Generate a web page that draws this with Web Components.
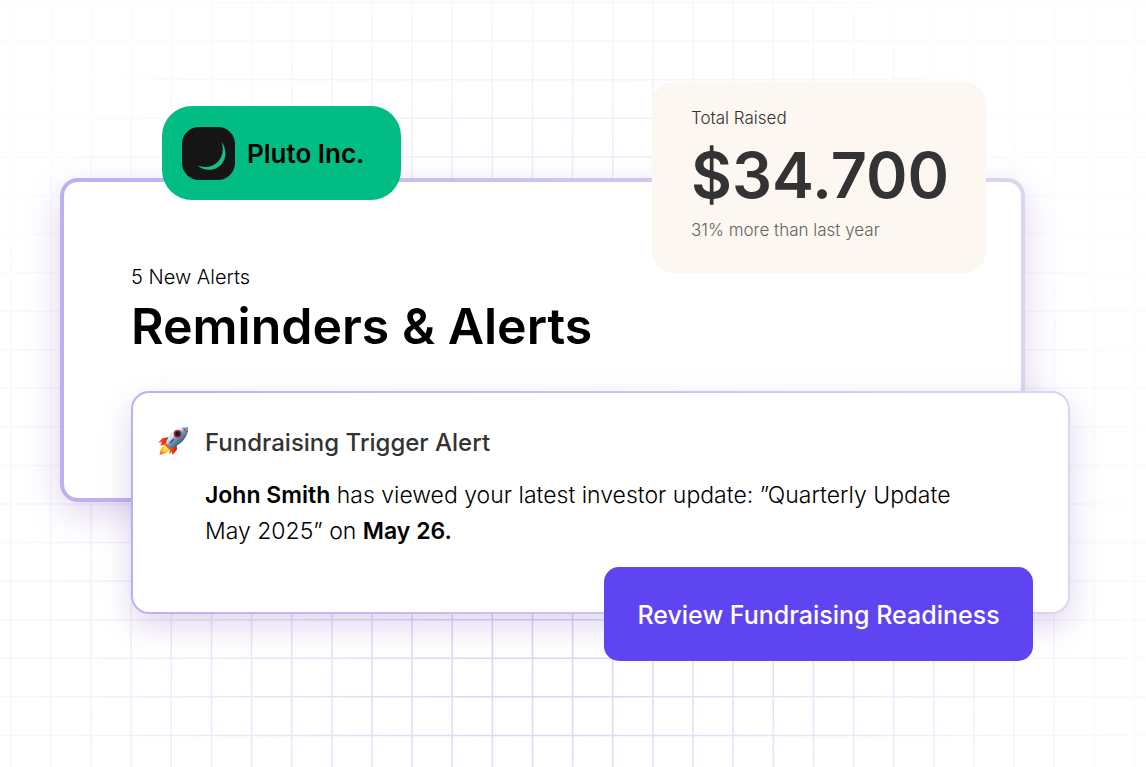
<!DOCTYPE html>
<html lang="en">
<head>
<meta charset="utf-8">
<meta name="viewport" content="width=device-width, initial-scale=1">
<title>Reminders &amp; Alerts</title>
<style>
  body { margin: 0; background: #fff; color: #000; font-family: Inter, "Open Sans", sans-serif; font-weight: 300; }
  b { font-weight: 600; }
</style>
</head>
<body>
<alerts-stage>
  <alerts-panel>
    <company-badge slot="overlay">Pluto Inc.</company-badge>
    <stat-card slot="overlay">
      <span slot="label">Total Raised</span>
      <span slot="value">$34.700</span>
      <span slot="note">31% more than last year</span>
    </stat-card>
    <span slot="count">5 New Alerts</span>
    <span slot="title">Reminders &amp; Alerts</span>
    <alert-card>
      <span slot="title">Fundraising Trigger Alert</span>
      <b>John Smith</b> has viewed your latest investor update: ”Quarterly Update<br>
      May 2025” on <b>May 26.</b>
      <action-button slot="action">Review Fundraising Readiness</action-button>
    </alert-card>
  </alerts-panel>
</alerts-stage>

<script>
const define = (name, html, setup) => customElements.define(name, class extends HTMLElement {
  constructor() {
    super();
    const template = document.createElement('template');
    template.innerHTML = html;
    this.attachShadow({ mode: 'open' }).append(template.content.cloneNode(true));
    if (setup) setup(this.shadowRoot);
  }
});

define('grid-backdrop', `
  <style>
    :host { display: block; overflow: hidden; }
    svg { display: block; width: 100%; height: 100%; }
  </style>
  <svg viewBox="0 0 1146 767" preserveAspectRatio="none" aria-hidden="true">
    <defs>
      <radialGradient id="fade" gradientUnits="userSpaceOnUse" cx="0" cy="0" r="1" gradientTransform="translate(540 610) scale(620 720)">
        <stop offset="0" stop-color="#fff" stop-opacity=".9"/>
        <stop offset=".3" stop-color="#fff" stop-opacity=".65"/>
        <stop offset=".75" stop-color="#fff" stop-opacity=".25"/>
        <stop offset="1" stop-color="#fff" stop-opacity=".08"/>
      </radialGradient>
      <mask id="m" maskUnits="userSpaceOnUse" x="0" y="0" width="1146" height="767"><rect width="1146" height="767" fill="url(#fade)"/></mask>
    </defs>
    <path fill="none" stroke="#d3ccf2" stroke-width="1.500" mask="url(#m)"/>
  </svg>`, root => {
  let d = '';
  for (let i = 0; i < 29; i++) d += `M${10.8 + i * 40.13} 0V767`;
  for (let i = 0; i < 20; i++) d += `M0 ${2.6 + i * 38.57}H1146`;
  root.querySelector('path').setAttribute('d', d);
});

define('alerts-stage', `
  <style>
    :host { display: block; position: relative; box-sizing: border-box; min-height: 100vh; padding: 178px 121px 0 60px; }
    grid-backdrop { position: absolute; inset: 0; }
    main { position: relative; }
  </style>
  <grid-backdrop></grid-backdrop>
  <main><slot></slot></main>`);

define('alerts-panel', `
  <style>
    :host {
      display: block; position: relative; padding: 81px 0 0 67px;
      border: 4px solid transparent; border-radius: 18px;
      background: linear-gradient(#fff, #fff) padding-box, linear-gradient(90deg, #bdb0f1, #ddd4f2) border-box;
      box-shadow: 0 12px 36px rgba(100, 50, 180, .2);
    }
    p, h1 { margin: 0; }
    p { font-size: 20px; line-height: 28px; }
    h1 { font-size: 50px; line-height: 70px; font-weight: 600; margin-bottom: 30px; }
  </style>
  <p><slot name="count"></slot></p>
  <h1><slot name="title"></slot></h1>
  <slot></slot>
  <slot name="overlay"></slot>`);

define('company-badge', `
  <style>
    :host {
      position: absolute; left: 98px; top: -76px; box-sizing: border-box; width: 239px;
      display: flex; align-items: center; gap: 12px; padding: 21px 20px 20px;
      border-radius: 30px; background: #02bd83; font-size: 26px; line-height: 36px; font-weight: 600; white-space: nowrap;
    }
    svg { flex: none; width: 53px; height: 53px; }
  </style>
  <svg viewBox="0 0 53 53" aria-hidden="true">
    <rect width="53" height="53" rx="17" fill="#151515"/>
    <path fill="#16c08b" d="M39.500 14.500C46 23.500 44.500 35.500 35 40.700C28.500 44.300 20.500 43 15.500 38.500C22.500 41.300 30.500 40 35.500 35.200C41 30 42 22 39.500 14.500Z"/>
  </svg>
  <slot></slot>`);

define('stat-card', `
  <style>
    :host {
      position: absolute; right: 35px; top: -100px; box-sizing: border-box; width: 334px;
      display: flex; flex-direction: column; padding: 24px 38px 31px 39px;
      border-radius: 22px; background: #fcf7f1; color: #333; white-space: nowrap;
    }
    div { font-size: 17px; line-height: 24px; }
    .value { font-size: 63px; line-height: 70px; font-weight: 600; margin: 10px 0 8px; }
    .note { color: #666462; }
  </style>
  <div><slot name="label"></slot></div>
  <div class="value"><slot name="value"></slot></div>
  <div class="note"><slot name="note"></slot></div>`);

define('rocket-icon', `
  <style>
    :host { display: block; flex: none; width: 32px; height: 32px; }
    svg { display: block; width: 100%; height: 100%; }
  </style>
  <svg viewBox="0 0 32 32" aria-hidden="true">
    <defs>
      <linearGradient id="hull" x1="12" y1="7" x2="23" y2="19" gradientUnits="userSpaceOnUse">
        <stop stop-color="#8fb1cc"/><stop offset=".3" stop-color="#e9f1f7"/><stop offset=".55" stop-color="#7da2c2"/><stop offset="1" stop-color="#335b80"/>
      </linearGradient>
      <linearGradient id="fin" x1="0" y1="0" x2="1" y2="0"><stop stop-color="#ff8a20"/><stop offset=".4" stop-color="#f4361c"/><stop offset="1" stop-color="#c81e1c"/></linearGradient>
      <radialGradient id="fire" cx=".6" cy=".35" r=".7"><stop stop-color="#fff27a"/><stop offset=".5" stop-color="#ffc928"/><stop offset="1" stop-color="#fb6a15"/></radialGradient>
    </defs>
    <path fill="url(#fin)" d="M12.500 12L5.500 13.200C4.200 14.500 2.500 16 1 17.500L5 17.600L3 20.500L9.500 19.500Z"/>
    <path fill="url(#fin)" d="M19.500 19L20 24.500C18.500 26.500 17 28.500 15.500 29.800L14.800 26.800L12.500 29.500L12.200 23Z"/>
    <path fill="url(#hull)" d="M31 2C31.500 8 28.500 14 23.500 18C20 20.800 16.500 22.600 12.800 23.800L8.500 19.300C9.500 14.500 12.500 9.500 17 6C21 3 26 1.700 31 2Z"/>
    <path fill="url(#fire)" d="M8.500 18.500C5.500 20 3.500 24 2.500 29.800C7.500 29 11.500 27.500 13.200 23.500Z"/>
    <path fill="#e54b24" d="M8.500 18.300L13.700 23.400L12.400 24.600L7.300 19.600Z"/>
    <circle cx="20.600" cy="8.800" r="3.900" fill="#b22229"/><circle cx="20.600" cy="8.800" r="2.400" fill="#111b28"/>
    <path fill="none" stroke="#a62e35" stroke-width="1" d="M26.500 2.600C27.500 5 28.800 6.500 30.700 7"/>
    <path fill="none" stroke="#274f75" stroke-width="1.500" d="M13 18L17 14"/>
  </svg>`);

define('alert-card', `
  <style>
    :host {
      display: flex; gap: 16px; position: relative; margin: 0 -49px -116px 0; padding: 32px 100px 63px 24px;
      border: 2px solid transparent; border-radius: 18px;
      background: linear-gradient(#fff, #fff) padding-box, linear-gradient(90deg, #bdb0f1, #ddd4f2) border-box;
      box-shadow: 0 12px 32px rgba(100, 50, 180, .2);
    }
    h2, p { margin: 0; line-height: 36px; }
    h2 { font-size: 24px; font-weight: 500; color: #333; margin-bottom: 16px; }
    p { font-size: 23px; }
    .action { position: absolute; right: 35px; bottom: -49px; }
  </style>
  <rocket-icon></rocket-icon>
  <div>
    <h2><slot name="title"></slot></h2>
    <p><slot></slot></p>
  </div>
  <div class="action"><slot name="action"></slot></div>`);

define('action-button', `
  <style>
    :host { display: block; }
    button {
      display: block; padding: 30px 32px 28px; width: 429px; border: 0; border-radius: 15px;
      background: #5f45f2; color: #fff; font: inherit; font-size: 25px; line-height: 36px; font-weight: 500; white-space: nowrap; cursor: pointer;
    }
  </style>
  <button type="button"><slot></slot></button>`);
</script>
</body>
</html>
